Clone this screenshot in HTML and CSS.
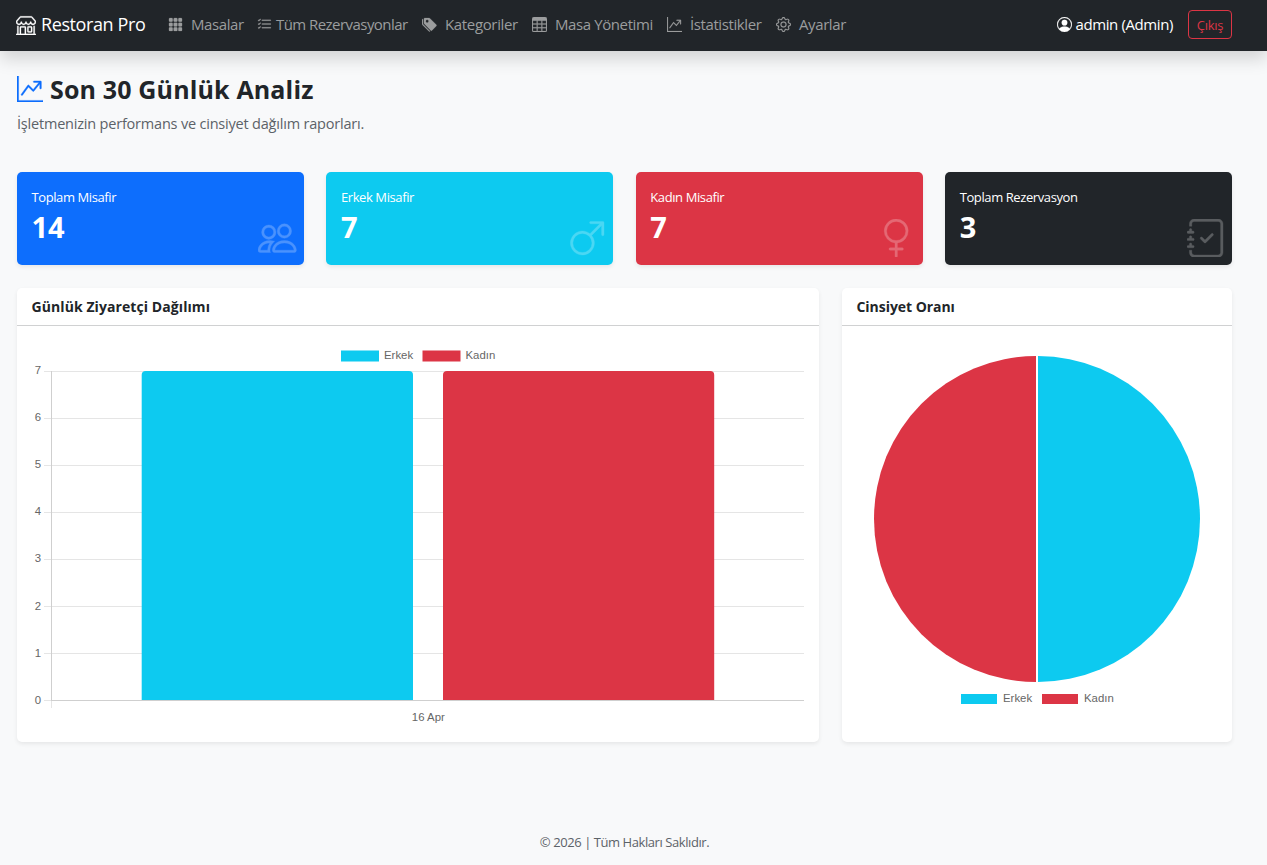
FILE: index.html
```html
<!DOCTYPE html>
<html lang="tr">
<head>
  <meta charset="UTF-8">
  <title>Restoran Pro</title>
  <link rel="stylesheet" href="styles.css">
</head>
<body>

<nav class="navbar">
  <a class="brand">
    <svg class="icon" viewBox="0 0 16 16"><path d="M2.97 1.35A1 1 0 0 1 3.73 1h8.54a1 1 0 0 1 .76.35l2.609 3.044A1.5 1.5 0 0 1 16 5.37v.255a2.375 2.375 0 0 1-4.25 1.458A2.37 2.37 0 0 1 9.875 8 2.37 2.37 0 0 1 8 7.083 2.37 2.37 0 0 1 6.125 8a2.37 2.37 0 0 1-1.875-.917A2.375 2.375 0 0 1 0 5.625V5.37a1.5 1.5 0 0 1 .361-.976zm1.78 4.275a1.375 1.375 0 0 0 2.75 0 .5.5 0 0 1 1 0 1.375 1.375 0 0 0 2.75 0 .5.5 0 0 1 1 0 1.375 1.375 0 1 0 2.75 0V5.37a.5.5 0 0 0-.12-.325L12.27 2H3.73L1.12 5.045A.5.5 0 0 0 1 5.37v.255a1.375 1.375 0 0 0 2.75 0 .5.5 0 0 1 1 0M1.5 8.5A.5.5 0 0 1 2 9v6h1v-5a1 1 0 0 1 1-1h3a1 1 0 0 1 1 1v5h6V9a.5.5 0 0 1 1 0v6h.5a.5.5 0 0 1 0 1H.5a.5.5 0 0 1 0-1H1V9a.5.5 0 0 1 .5-.5M4 15h3v-5H4zm5-5a1 1 0 0 1 1-1h2a1 1 0 0 1 1 1v3a1 1 0 0 1-1 1h-2a1 1 0 0 1-1-1zm3 0h-2v3h2z"/></svg>
    <span>Restoran Pro</span>
  </a>
  <div class="nav-links">
    <a class="nav-link masalar">
      <svg class="icon" viewBox="0 0 16 16"><path d="M1 2a1 1 0 0 1 1-1h2a1 1 0 0 1 1 1v2a1 1 0 0 1-1 1H2a1 1 0 0 1-1-1zm5 0a1 1 0 0 1 1-1h2a1 1 0 0 1 1 1v2a1 1 0 0 1-1 1H7a1 1 0 0 1-1-1zm5 0a1 1 0 0 1 1-1h2a1 1 0 0 1 1 1v2a1 1 0 0 1-1 1h-2a1 1 0 0 1-1-1zM1 7a1 1 0 0 1 1-1h2a1 1 0 0 1 1 1v2a1 1 0 0 1-1 1H2a1 1 0 0 1-1-1zm5 0a1 1 0 0 1 1-1h2a1 1 0 0 1 1 1v2a1 1 0 0 1-1 1H7a1 1 0 0 1-1-1zm5 0a1 1 0 0 1 1-1h2a1 1 0 0 1 1 1v2a1 1 0 0 1-1 1h-2a1 1 0 0 1-1-1zM1 12a1 1 0 0 1 1-1h2a1 1 0 0 1 1 1v2a1 1 0 0 1-1 1H2a1 1 0 0 1-1-1zm5 0a1 1 0 0 1 1-1h2a1 1 0 0 1 1 1v2a1 1 0 0 1-1 1H7a1 1 0 0 1-1-1zm5 0a1 1 0 0 1 1-1h2a1 1 0 0 1 1 1v2a1 1 0 0 1-1 1h-2a1 1 0 0 1-1-1z"/></svg>
      <span>Masalar</span>
    </a>
    <a class="nav-link rezervasyonlar">
      <svg class="icon" viewBox="0 0 16 16"><path d="M5 11.5a.5.5 0 0 1 .5-.5h9a.5.5 0 0 1 0 1h-9a.5.5 0 0 1-.5-.5m0-4a.5.5 0 0 1 .5-.5h9a.5.5 0 0 1 0 1h-9a.5.5 0 0 1-.5-.5m0-4a.5.5 0 0 1 .5-.5h9a.5.5 0 0 1 0 1h-9a.5.5 0 0 1-.5-.5M3.854 2.146a.5.5 0 0 1 0 .708l-1.5 1.5a.5.5 0 0 1-.708 0l-.5-.5a.5.5 0 1 1 .708-.708L2 3.293l1.146-1.147a.5.5 0 0 1 .708 0m0 4a.5.5 0 0 1 0 .708l-1.5 1.5a.5.5 0 0 1-.708 0l-.5-.5a.5.5 0 1 1 .708-.708L2 7.293l1.146-1.147a.5.5 0 0 1 .708 0m0 4a.5.5 0 0 1 0 .708l-1.5 1.5a.5.5 0 0 1-.708 0l-.5-.5a.5.5 0 0 1 .708-.708l.146.147 1.146-1.147a.5.5 0 0 1 .708 0"/></svg>
      <span>Tüm Rezervasyonlar</span>
    </a>
    <a class="nav-link kategoriler">
      <svg class="icon" viewBox="0 0 16 16"><path d="M2 2a1 1 0 0 1 1-1h4.586a1 1 0 0 1 .707.293l7 7a1 1 0 0 1 0 1.414l-4.586 4.586a1 1 0 0 1-1.414 0l-7-7A1 1 0 0 1 2 6.586zm3.5 4a1.5 1.5 0 1 0 0-3 1.5 1.5 0 0 0 0 3"/><path d="M1.293 7.793A1 1 0 0 1 1 7.086V2a1 1 0 0 0-1 1v4.586a1 1 0 0 0 .293.707l7 7a1 1 0 0 0 1.414 0l.043-.043z"/></svg>
      <span>Kategoriler</span>
    </a>
    <a class="nav-link yonetim">
      <svg class="icon" viewBox="0 0 16 16"><path d="M0 2a2 2 0 0 1 2-2h12a2 2 0 0 1 2 2v12a2 2 0 0 1-2 2H2a2 2 0 0 1-2-2zm15 2h-4v3h4zm0 4h-4v3h4zm0 4h-4v3h3a1 1 0 0 0 1-1zm-5 3v-3H6v3zm-5 0v-3H1v2a1 1 0 0 0 1 1zm-4-4h4V8H1zm0-4h4V4H1zm5-3v3h4V4zm4 4H6v3h4z"/></svg>
      <span>Masa Yönetimi</span>
    </a>
    <a class="nav-link istatistik">
      <svg class="icon" viewBox="0 0 16 16"><path d="M0 0h1v15h15v1H0zm10 3.5a.5.5 0 0 1 .5-.5h4a.5.5 0 0 1 .5.5v4a.5.5 0 0 1-1 0V4.9l-3.613 4.417a.5.5 0 0 1-.74.037L7.06 6.767l-3.656 5.027a.5.5 0 0 1-.808-.588l4-5.5a.5.5 0 0 1 .758-.06l2.609 2.61L13.445 4H10.5a.5.5 0 0 1-.5-.5"/></svg>
      <span>İstatistikler</span>
    </a>
    <a class="nav-link ayarlar">
      <svg class="icon" viewBox="0 0 16 16"><path d="M8 4.754a3.246 3.246 0 1 0 0 6.492 3.246 3.246 0 0 0 0-6.492M5.754 8a2.246 2.246 0 1 1 4.492 0 2.246 2.246 0 0 1-4.492 0"/><path d="M9.796 1.343c-.527-1.79-3.065-1.79-3.592 0l-.094.319a.873.873 0 0 1-1.255.52l-.292-.16c-1.64-.892-3.433.902-2.54 2.541l.159.292a.873.873 0 0 1-.52 1.255l-.319.094c-1.79.527-1.79 3.065 0 3.592l.319.094a.873.873 0 0 1 .52 1.255l-.16.292c-.892 1.64.901 3.434 2.541 2.54l.292-.159a.873.873 0 0 1 1.255.52l.094.319c.527 1.79 3.065 1.79 3.592 0l.094-.319a.873.873 0 0 1 1.255-.52l.292.16c1.64.893 3.434-.902 2.54-2.541l-.159-.292a.873.873 0 0 1 .52-1.255l.319-.094c1.79-.527 1.79-3.065 0-3.592l-.319-.094a.873.873 0 0 1-.52-1.255l.16-.292c.893-1.64-.902-3.433-2.541-2.54l-.292.159a.873.873 0 0 1-1.255-.52zm-2.633.283c.246-.835 1.428-.835 1.674 0l.094.319a1.873 1.873 0 0 0 2.693 1.115l.291-.16c.764-.415 1.6.42 1.184 1.185l-.159.292a1.873 1.873 0 0 0 1.116 2.692l.318.094c.835.246.835 1.428 0 1.674l-.319.094a1.873 1.873 0 0 0-1.115 2.693l.16.291c.415.764-.42 1.6-1.185 1.184l-.291-.159a1.873 1.873 0 0 0-2.693 1.116l-.094.318c-.246.835-1.428.835-1.674 0l-.094-.319a1.873 1.873 0 0 0-2.692-1.115l-.292.16c-.764.415-1.6-.42-1.184-1.185l.159-.291A1.873 1.873 0 0 0 1.945 8.93l-.319-.094c-.835-.246-.835-1.428 0-1.674l.319-.094A1.873 1.873 0 0 0 3.06 4.377l-.16-.292c-.415-.764.42-1.6 1.185-1.184l.292.159a1.873 1.873 0 0 0 2.692-1.115z"/></svg>
      <span>Ayarlar</span>
    </a>
  </div>
  <div class="user">
    <svg class="icon" viewBox="0 0 16 16"><path d="M11 6a3 3 0 1 1-6 0 3 3 0 0 1 6 0"/><path d="M0 8a8 8 0 1 1 16 0A8 8 0 0 1 0 8m8-7a7 7 0 0 0-5.468 11.37C3.242 11.226 4.805 10 8 10s4.757 1.225 5.468 2.37A7 7 0 0 0 8 1"/></svg>
    <span>admin (Admin)</span>
  </div>
  <button class="logout">Çıkış</button>
</nav>

<main class="container">
  <h1 class="title">
    <svg class="icon" viewBox="0 0 16 16"><path d="M0 0h1v15h15v1H0zm10 3.5a.5.5 0 0 1 .5-.5h4a.5.5 0 0 1 .5.5v4a.5.5 0 0 1-1 0V4.9l-3.613 4.417a.5.5 0 0 1-.74.037L7.06 6.767l-3.656 5.027a.5.5 0 0 1-.808-.588l4-5.5a.5.5 0 0 1 .758-.06l2.609 2.61L13.445 4H10.5a.5.5 0 0 1-.5-.5"/></svg>
    <span>Son 30 Günlük Analiz</span>
  </h1>
  <p class="subtitle">İşletmenizin performans ve cinsiyet dağılım raporları.</p>

  <div class="stats">
    <div class="stat blue">
      <div class="stat-label">Toplam Misafir</div>
      <div class="stat-value">14</div>
      <svg class="stat-icon" viewBox="0 0 16 16"><path d="M15 14s1 0 1-1-1-4-5-4-5 3-5 4 1 1 1 1zm-7.978-1L7 12.996c.001-.264.167-1.03.76-1.72C8.312 10.629 9.282 10 11 10c1.717 0 2.687.63 3.24 1.276.593.69.758 1.457.76 1.72l-.008.002-.014.002zM11 7a2 2 0 1 0 0-4 2 2 0 0 0 0 4m3-2a3 3 0 1 1-6 0 3 3 0 0 1 6 0M6.936 9.28a6 6 0 0 0-1.23-.247A7 7 0 0 0 5 9c-4 0-5 3-5 4q0 1 1 1h4.216A2.24 2.24 0 0 1 5 13c0-1.01.377-2.042 1.09-2.904.243-.294.526-.569.846-.816M4.92 10A5.5 5.5 0 0 0 4 13H1c0-.26.164-1.03.76-1.724.545-.636 1.492-1.256 3.16-1.275ZM1.5 5.5a3 3 0 1 1 6 0 3 3 0 0 1-6 0m3-2a2 2 0 1 0 0 4 2 2 0 0 0 0-4"/></svg>
    </div>
    <div class="stat cyan">
      <div class="stat-label">Erkek Misafir</div>
      <div class="stat-value">7</div>
      <svg class="stat-icon" viewBox="0 0 16 16"><path d="M9.5 2a.5.5 0 0 1 0-1h5a.5.5 0 0 1 .5.5v5a.5.5 0 0 1-1 0V2.707L9.871 6.836a5 5 0 1 1-.707-.707L13.293 2zM6 6a4 4 0 1 0 0 8 4 4 0 0 0 0-8"/></svg>
    </div>
    <div class="stat red">
      <div class="stat-label">Kadın Misafir</div>
      <div class="stat-value">7</div>
      <svg class="stat-icon" viewBox="0 0 16 16"><path d="M8 1a4 4 0 1 0 0 8 4 4 0 0 0 0-8M3 5a5 5 0 1 1 5.5 4.975V12h2a.5.5 0 0 1 0 1h-2v2.5a.5.5 0 0 1-1 0V13h-2a.5.5 0 0 1 0-1h2V9.975A5 5 0 0 1 3 5"/></svg>
    </div>
    <div class="stat dark">
      <div class="stat-label">Toplam Rezervasyon</div>
      <div class="stat-value">3</div>
      <svg class="stat-icon" viewBox="0 0 16 16"><path d="M10.854 6.146a.5.5 0 0 1 0 .708l-3 3a.5.5 0 0 1-.708 0l-1.5-1.5a.5.5 0 1 1 .708-.708L7.5 8.793l2.646-2.647a.5.5 0 0 1 .708 0"/><path d="M3 0h10a2 2 0 0 1 2 2v12a2 2 0 0 1-2 2H3a2 2 0 0 1-2-2v-1h1v1a1 1 0 0 0 1 1h10a1 1 0 0 0 1-1V2a1 1 0 0 0-1-1H3a1 1 0 0 0-1 1v1H1V2a2 2 0 0 1 2-2"/><path d="M1 5v-.5a.5.5 0 0 1 1 0V5h.5a.5.5 0 0 1 0 1h-2a.5.5 0 0 1 0-1zm0 3v-.5a.5.5 0 0 1 1 0V8h.5a.5.5 0 0 1 0 1h-2a.5.5 0 0 1 0-1zm0 3v-.5a.5.5 0 0 1 1 0v.5h.5a.5.5 0 0 1 0 1h-2a.5.5 0 0 1 0-1z"/></svg>
    </div>
  </div>

  <div class="charts">
    <section class="card">
      <h2 class="card-header daily">Günlük Ziyaretçi Dağılımı</h2>
      <svg class="chart" viewBox="0 0 802 416">
        <!-- legend -->
        <rect class="fill-cyan" x="324" y="24.5" width="38" height="11"/>
        <text x="367" y="33">Erkek</text>
        <rect class="fill-red" x="405.5" y="24.5" width="38" height="11"/>
        <text x="448.5" y="33">Kadın</text>
        <!-- grid -->
        <path class="grid" d="M27 45.5H787M27 92.5H787M27 139.5H787M27 186.5H787M27 233.5H787M27 280.5H787M27 327.5H787M27 374.5H787M34.5 45V382"/>
        <path class="axis" d="M34.5 45V374M34 374.5H787"/>
        <g class="ticks">
          <text x="24" y="48">7</text>
          <text x="24" y="95">6</text>
          <text x="24" y="142">5</text>
          <text x="24" y="189">4</text>
          <text x="24" y="236">3</text>
          <text x="24" y="284">2</text>
          <text x="24" y="331">1</text>
          <text x="24" y="378">0</text>
        </g>
        <!-- bars -->
        <path class="fill-cyan" d="M124.7 374V49a4 4 0 0 1 4-4H392a4 4 0 0 1 4 4V374z"/>
        <path class="fill-red" d="M426 374V49a4 4 0 0 1 4-4H693.2a4 4 0 0 1 4 4V374z"/>
        <text class="center" x="411.3" y="395">16 Apr</text>
      </svg>
    </section>
    <section class="card">
      <h2 class="card-header ratio">Cinsiyet Oranı</h2>
      <svg class="chart" viewBox="0 0 390 416">
        <path class="fill-cyan" d="M196 30a162 163 0 0 1 0 326z"/>
        <path class="fill-red" d="M194 30a162 163 0 0 0 0 326z"/>
        <rect class="fill-cyan" x="119" y="368" width="36" height="10"/>
        <text x="161" y="376">Erkek</text>
        <rect class="fill-red" x="200" y="368" width="36" height="10"/>
        <text x="242" y="376">Kadın</text>
      </svg>
    </section>
  </div>
</main>

<footer class="footer">© 2026 | Tüm Hakları Saklıdır.</footer>

</body>
</html>
```
FILE: styles.css
```css
* {
  box-sizing: border-box;
}

body {
  margin: 0;
  height: 865px;
  overflow: hidden;
  background: #f8f9fa;
  color: #212529;
  font-family: "Open Sans", "Noto Sans", sans-serif;
  font-size: 15px;
  display: flex;
  flex-direction: column;
}

.icon {
  fill: currentColor;
  stroke: currentColor;
  stroke-width: 0.2;
  flex: none;
  width: 15px;
  height: 15px;
}

span, .stat-label, .footer, .subtitle {
  white-space: nowrap;
}

/* navbar */
.navbar {
  display: flex;
  align-items: center;
  height: 51px;
  flex: none;
  padding: 0 35px 2px 16px;
  background: #212529;
  box-shadow: 0 8px 16px rgba(0, 0, 0, 0.15);
}

.navbar span {
  padding-bottom: 2px;
}

.brand {
  display: flex;
  align-items: center;
  gap: 5px;
  width: 152px;
  color: #fff;
  font-size: 18px;
  letter-spacing: -0.4px;
}

.brand .icon {
  width: 20px;
  height: 20px;
}

.nav-links {
  display: flex;
  flex: 1;
}

.nav-link {
  display: flex;
  align-items: center;
  gap: 8px;
  color: #9b9d9e;
  letter-spacing: -0.4px;
}

.masalar { width: 89px; }
.rezervasyonlar { width: 165px; gap: 4px; letter-spacing: -0.55px; }
.kategoriler { width: 110px; letter-spacing: -0.35px; }
.yonetim { width: 135px; }
.istatistik { width: 109px; }

.user {
  display: flex;
  align-items: center;
  gap: 4px;
  color: #fff;
  letter-spacing: -0.4px;
  margin-right: 15px;
}

.logout {
  width: 44px;
  height: 29px;
  padding: 0;
  border: 1px solid #dc3545;
  border-radius: 4px;
  background: none;
  color: #dc3545;
  font: 13px "Open Sans", sans-serif;
  letter-spacing: -0.3px;
}

/* page */
.container {
  width: 1249px;
  padding: 0 17px;
}

.title {
  display: flex;
  align-items: center;
  gap: 7px;
  height: 34px;
  margin: 21px 0 0;
  font-size: 25px;
  font-weight: 700;
  letter-spacing: 0.15px;
}

.title .icon {
  width: 26px;
  height: 26px;
  color: #0d6efd;
}

.subtitle {
  height: 22px;
  margin: 7px 0 0;
  line-height: 22px;
  font-size: 14.5px;
  letter-spacing: -0.2px;
  color: #5c6268;
}

.stats {
  display: grid;
  grid-template-columns: repeat(4, 1fr);
  gap: 22.6px;
  margin-top: 37px;
}

.stat {
  position: relative;
  height: 93px;
  padding: 15px 14.5px;
  border-radius: 5px;
  color: #fff;
  box-shadow: 0 2px 4px rgba(0, 0, 0, 0.075);
}

.stat-label {
  height: 21px;
  line-height: 21px;
  font-size: 13px;
  letter-spacing: -0.4px;
}

.stat-value {
  height: 38px;
  line-height: 37px;
  font-size: 29px;
  font-weight: 700;
}

.stat-icon {
  position: absolute;
  right: 7px;
  bottom: 8px;
  width: 38.4px;
  height: 38.4px;
  fill: #fff;
  stroke: #fff;
  stroke-width: 0.15;
  opacity: 0.25;
}

.blue { background: #0d6efd; }
.cyan { background: #0dcaf0; }
.red { background: #dc3545; }
.dark { background: #212529; }

.charts {
  display: grid;
  grid-template-columns: 802px 390px;
  gap: 23px;
  margin-top: 23px;
}

.card {
  height: 454px;
  border-radius: 5px;
  background: #fff;
  box-shadow: 0 2px 4px rgba(0, 0, 0, 0.075);
}

.card-header {
  height: 38px;
  margin: 0;
  padding: 0 14.5px;
  border-bottom: 1px solid #d0d1d2;
  line-height: 37px;
  font-size: 14px;
  font-weight: 700;
}

.daily { letter-spacing: 0.08px; }
.ratio { letter-spacing: -0.05px; }

.chart {
  display: block;
  width: 100%;
  height: 416px;
  font-family: "Liberation Sans", Arial, sans-serif;
  font-size: 11.4px;
}

.chart text { fill: #666; }
.chart .center { text-anchor: middle; }
.chart .ticks { text-anchor: end; }
.fill-cyan { fill: #0dcaf0; }
.fill-red { fill: #dc3545; }
.grid { stroke: #e5e5e5; fill: none; }
.axis { stroke: #cfcfcf; fill: none; }

.footer {
  width: 1249px;
  margin-top: 90px;
  line-height: 21px;
  text-align: center;
  font-size: 13px;
  letter-spacing: -0.43px;
  color: #5c6268;
}
```
